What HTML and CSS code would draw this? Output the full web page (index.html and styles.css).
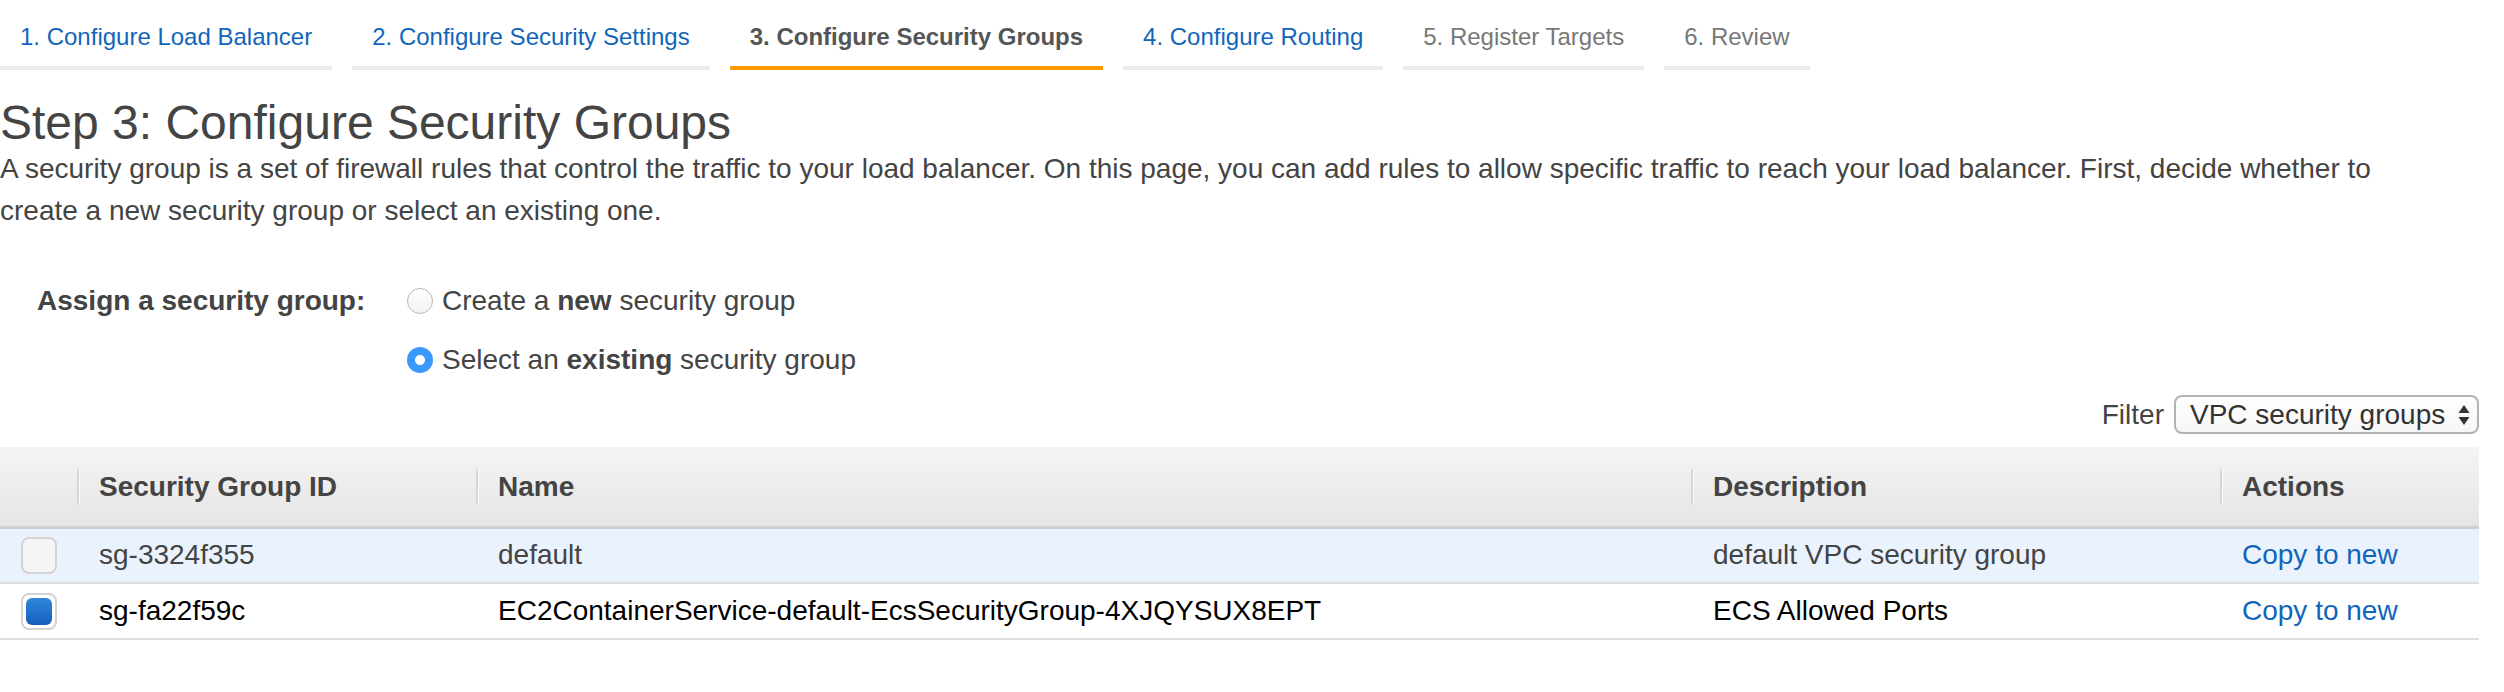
FILE: index.html
```html
<!DOCTYPE html>
<html lang="en">
<head>
<meta charset="utf-8">
<title>Step 3: Configure Security Groups</title>
<link rel="stylesheet" href="styles.css">
</head>
<body>
<div class="page">
  <nav class="steps">
    <a class="step done">1. Configure Load Balancer</a>
    <a class="step done">2. Configure Security Settings</a>
    <span class="step active">3. Configure Security Groups</span>
    <a class="step done">4. Configure Routing</a>
    <span class="step todo">5. Register Targets</span>
    <span class="step todo">6. Review</span>
  </nav>

  <h1 class="title">Step 3: Configure Security Groups</h1>
  <p class="intro">A security group is a set of firewall rules that control the traffic to your load balancer. On this page, you can add rules to allow specific traffic to reach your load balancer. First, decide whether to create a new security group or select an existing one.</p>

  <div class="assign">
    <div class="assign-label">Assign a security group:</div>
    <div class="assign-options">
      <label class="option"><span class="radio"></span><span>Create a <b>new</b> security group</span></label>
      <label class="option"><span class="radio checked"></span><span>Select an <b>existing</b> security group</span></label>
    </div>
  </div>

  <div class="filter-row">
    <span class="filter-label">Filter</span>
    <div class="select">
      <span>VPC security groups</span>
      <svg class="arrows" width="14" height="22" viewBox="0 0 14 22"><path d="M7 1 L12.5 9 L1.5 9 Z" fill="#333"/><path d="M7 21 L12.5 13 L1.5 13 Z" fill="#333"/></svg>
    </div>
  </div>

  <table class="grid">
    <colgroup>
      <col class="c-check"><col class="c-id"><col class="c-name"><col class="c-desc"><col class="c-act">
    </colgroup>
    <thead>
      <tr>
        <th></th>
        <th><div class="th-in">Security Group ID</div></th>
        <th><div class="th-in">Name</div></th>
        <th><div class="th-in">Description</div></th>
        <th><div class="th-in">Actions</div></th>
      </tr>
    </thead>
    <tbody>
      <tr class="hover">
        <td class="cb-cell"><span class="cb"></span></td>
        <td>sg-3324f355</td>
        <td>default</td>
        <td>default VPC security group</td>
        <td><a class="link">Copy to new</a></td>
      </tr>
      <tr class="selected">
        <td class="cb-cell"><span class="cb checked"></span></td>
        <td>sg-fa22f59c</td>
        <td>EC2ContainerService-default-EcsSecurityGroup-4XJQYSUX8EPT</td>
        <td>ECS Allowed Ports</td>
        <td><a class="link">Copy to new</a></td>
      </tr>
    </tbody>
  </table>
</div>
</body>
</html>
```

FILE: styles.css
```css
* { box-sizing: border-box; }
html, body { margin: 0; padding: 0; background: #fff; }
body {
  font-family: "Liberation Sans", Arial, Helvetica, sans-serif;
  color: #444;
  font-size: 28px;
}
.page { width: 2479px; }

.steps { display: flex; gap: 20px; }
.step {
  font-size: 24px;
  line-height: 28px;
  padding: 23px 20px 15px;
  border-bottom: 4px solid #ececec;
  white-space: nowrap;
}
.step.done { color: #1166bb; }
.step.active { color: #555; font-weight: bold; border-bottom-color: #ff9900; }
.step.todo { color: #777; }

.title {
  margin: 28px 0 0;
  font-size: 48px;
  line-height: 50px;
  font-weight: normal;
  color: #444;
}
.intro {
  margin: 0;
  max-width: 2420px;
  font-size: 28px;
  line-height: 42px;
  color: #444;
}

.assign { display: flex; margin-top: 48px; }
.assign-label {
  width: 407px;
  padding-left: 37px;
  font-weight: bold;
  line-height: 42px;
}
.assign-options { display: flex; flex-direction: column; gap: 17px; }
.option { display: flex; align-items: center; gap: 9px; line-height: 42px; }
.radio {
  width: 26px; height: 26px; border-radius: 50%;
  border: 1.5px solid #b9b9b9;
  background: linear-gradient(#fff, #f2f2f2);
  display: inline-block;
}
.radio.checked {
  border: none;
  background: radial-gradient(circle, #fff 0 4.5px, #3b99fc 5.5px);
}

.filter-row {
  display: flex; justify-content: flex-end; align-items: center; gap: 10px;
  margin-top: 14px;
}
.filter-label { line-height: 32px; }
.select {
  display: flex; align-items: center; justify-content: space-between;
  width: 305px; height: 39px;
  padding: 0 6px 0 14px;
  border: 2px solid #b3b3b3;
  border-radius: 8px;
  background: linear-gradient(#fff, #f6f6f6);
  color: #333;
}

.grid {
  margin-top: 13px;
  width: 2479px;
  border-collapse: collapse;
  table-layout: fixed;
}
.c-check { width: 77px; }
.c-id { width: 399px; }
.c-name { width: 1215px; }
.c-desc { width: 529px; }
.c-act { width: 259px; }

.grid th {
  height: 80px;
  padding: 0;
  text-align: left;
  background: linear-gradient(#f4f4f4, #e5e5e5);
  border-bottom: 3px solid #cfcfcf;
  font-weight: bold;
  color: #444;
}
.th-in {
  border-left: 2px solid #d6d6d6;
  padding-left: 20px;
  line-height: 35px;
  box-shadow: inset 1px 0 0 #fafafa;
}
.grid td {
  height: 56px;
  padding: 0 0 0 22px;
  border-bottom: 2px solid #dddddd;
  white-space: nowrap;
}
.grid td.cb-cell { padding: 0; text-align: center; }
.hover td { background: #eaf2fd; color: #444; }
.selected td { background: #fff; color: #000; }
.link { color: #1166bb; }

.cb {
  display: inline-block; vertical-align: middle;
  width: 36px; height: 37px;
  border: 2px solid #d3d3d3;
  border-radius: 8px;
  background: #f5f5f5;
}
.cb.checked {
  background: #fff;
  padding: 3px;
}
.cb.checked::after {
  content: "";
  display: block;
  width: 100%; height: 100%;
  border-radius: 6px;
  background: linear-gradient(#2f86dc, #1560bd);
}
```
